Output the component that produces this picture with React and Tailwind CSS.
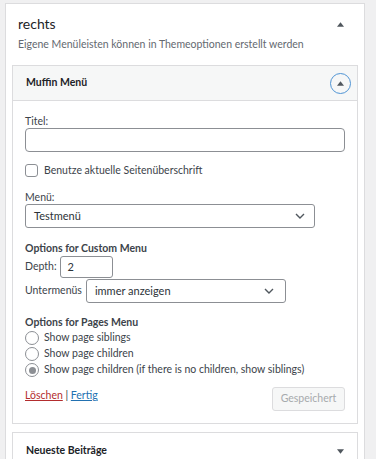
import React from 'react'

const font = { fontFamily: 'Lato, "Noto Sans", Arial, sans-serif' }

const Chevron = () => (
  <svg width="10" height="6" viewBox="0 0 10 6" className="shrink-0">
    <path d="M1 1l4 4 4-4" fill="none" stroke="#50575e" strokeWidth="1.4" />
  </svg>
)

const Radio = ({ checked, label }) => (
  <label className="flex items-center h-[16px]">
    <span className="w-[14px] h-[14px] rounded-full border border-[#8c8f94] bg-white flex items-center justify-center shrink-0">
      {checked && <span className="w-[7px] h-[7px] rounded-full bg-[#8c8f94]" />}
    </span>
    <span className="ml-[5px] text-[#3c434a]">{label}</span>
  </label>
)

export default function App() {
  return (
    <div className="w-[376px] h-[459px] bg-[#f0f0f1] overflow-hidden pt-[3px] pl-[5px] text-[10.5px]" style={font}>
      <div className="w-[360px] h-[470px] bg-white border border-[#dcdcde]">
        {/* sidebar header */}
        <div className="flex items-center justify-between h-[20px] mt-[10px] pl-[12px] pr-[20px]">
          <h2 className="text-[14px] text-[#1d2327] leading-[20px]">rechts</h2>
          <svg width="7" height="5" viewBox="0 0 8 5"><path d="M4 0l4 5H0z" fill="#50575e" /></svg>
        </div>
        <p className="mt-[3px] pl-[12px] text-[#646970] leading-[14px]">Eigene Menüleisten können in Themeoptionen erstellt werden</p>

        {/* widget */}
        <div className="mt-[14px] ml-[6px] w-[346px] border border-[#dcdcde]">
          <div className="h-[35px] bg-[#f6f7f7] border-b border-[#dcdcde] flex items-center justify-between pl-[13px] pr-[6px]">
            <span className="font-bold text-[#1d2327]">Muffin Menü</span>
            <span className="w-[21px] h-[21px] rounded-full border-[1.5px] border-[#4f94d4] flex items-center justify-center">
              <svg width="7" height="5" viewBox="0 0 8 5"><path d="M4 0l4 5H0z" fill="#50575e" /></svg>
            </span>
          </div>

          <div className="px-[12px] pt-[13px] pb-[12px] text-[#3c434a]">
            <div className="leading-[14px]">Titel:</div>
            <input className="block w-[320px] h-[24px] rounded-[4px] border border-[#8c8f94] bg-white outline-none" />

            <label className="flex items-center mt-[11px] h-[15px]">
              <span className="w-[13px] h-[13px] rounded-[3px] border border-[#8c8f94] bg-white shrink-0" />
              <span className="ml-[6px]">Benutze aktuelle Seitenüberschrift</span>
            </label>

            <div className="mt-[13px] leading-[13px]">Menü:</div>
            <div className="w-[290px] h-[24px] rounded-[3px] border border-[#8c8f94] flex items-center justify-between pl-[8px] pr-[9px] text-[11px] text-[#2c3338]">
              <span>Testmenü</span>
              <Chevron />
            </div>

            <div className="mt-[13px] font-bold leading-[14px]">Options for Custom Menu</div>
            <div className="mt-[1px] flex items-center h-[22px]">
              <span>Depth:</span>
              <div className="ml-[3px] w-[53px] h-[22px] rounded-[3px] border border-[#8c8f94] flex items-center pl-[7px] text-[11px] text-[#2c3338]">2</div>
            </div>
            <div className="mt-[1px] flex items-center h-[24px]">
              <span>Untermenüs</span>
              <div className="ml-[4px] w-[200px] h-[24px] rounded-[3px] border border-[#8c8f94] flex items-center justify-between pl-[8px] pr-[11px] text-[11px] text-[#2c3338]">
                <span>immer anzeigen</span>
                <Chevron />
              </div>
            </div>

            <div className="mt-[12px] font-bold leading-[14px]">Options for Pages Menu</div>
            <div className="mt-[1px] flex flex-col">
              <Radio label="Show page siblings" />
              <Radio label="Show page children" />
              <Radio checked label="Show page children (if there is no children, show siblings)" />
            </div>

            <div className="mt-[9px] flex items-start justify-between">
              <div className="pt-[1px] leading-[14px]">
                <a className="text-[#b32d2e] underline">Löschen</a>
                <span className="text-[#3c434a]"> | </span>
                <a className="text-[#2271b1] underline">Fertig</a>
              </div>
              <div className="w-[73px] h-[24px] rounded-[3px] border border-[#dcdcde] bg-[#f6f7f7] text-[#a7aaad] flex items-center justify-center">Gespeichert</div>
            </div>
          </div>
        </div>

        {/* next widget */}
        <div className="mt-[8px] ml-[6px] w-[346px] h-[40px] border border-[#dcdcde] flex items-start justify-between pl-[13px] pr-[13px]">
          <div className="h-[36px] flex items-center w-full justify-between">
            <span className="font-bold text-[#1d2327]">Neueste Beiträge</span>
            <svg width="7" height="5" viewBox="0 0 8 5"><path d="M0 0h8L4 5z" fill="#50575e" /></svg>
          </div>
        </div>
      </div>
    </div>
  )
}
